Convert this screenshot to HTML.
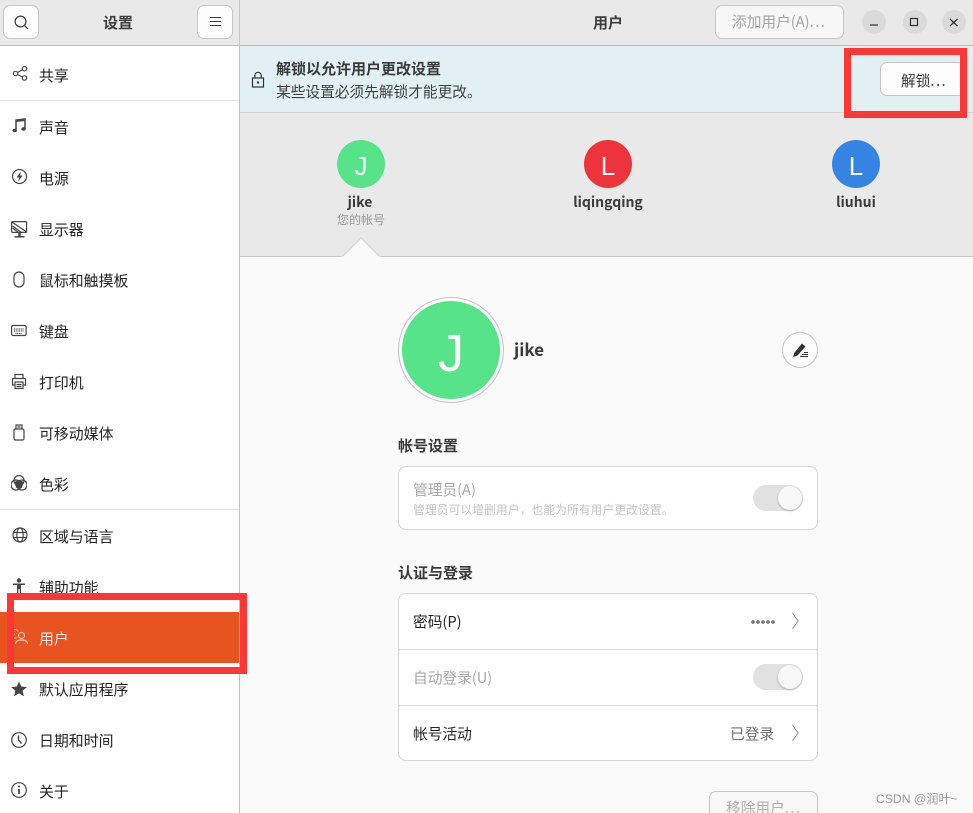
<!DOCTYPE html>
<html lang="zh-CN"><head><meta charset="utf-8"><title>设置</title>
<style>
*{box-sizing:border-box}
html,body{margin:0;padding:0;width:973px;height:813px;overflow:hidden;background:#fafafb}
#w{position:relative;width:973px;height:813px;overflow:hidden;background:#fafafb;font-family:"Liberation Sans","Noto Sans CJK SC",sans-serif;color:#242424}
.a{position:absolute}
.t{position:absolute;white-space:nowrap;font-size:14.7px;line-height:20px;font-family:"Noto Sans CJK SC","Liberation Sans",sans-serif}
.b{font-weight:700;font-size:15px}
.n{left:39px;font-size:14.9px}
.d{letter-spacing:1.5px}
.s{position:absolute;left:11px;width:16px;height:16px;fill:none;stroke:#454545;stroke-width:1.2}
.btn{position:absolute;background:#fdfdfd;border:1px solid #c6c6c6;border-radius:7px}
.tog{position:absolute;width:50px;height:26px;border-radius:13px;background:#e1e1e1}
.tog i{position:absolute;right:1px;top:1px;width:24px;height:24px;border-radius:50%;background:#f8f8f8;box-shadow:0 1px 2px rgba(0,0,0,.25)}
.av{position:absolute;border-radius:50%;color:#fff;text-align:center;font-family:"Liberation Sans",sans-serif}
.wc{position:absolute;top:10px;width:24px;height:24px;border-radius:50%;background:#dadada}
</style></head><body><div id="w">

<!-- header -->
<div class="a" style="left:0;top:0;width:973px;height:46px;background:#e9e9e9;border-bottom:1px solid #bdbdbd"></div>
<div class="a" style="left:239px;top:0;width:1px;height:46px;background:#c4c4c4"></div>
<div class="btn" style="left:3px;top:5px;width:36px;height:34px"></div>
<svg class="a" style="left:14px;top:15px" width="16" height="16" fill="none" stroke="#3a3a3a" stroke-width="1.2"><circle cx="6.500" cy="6.500" r="5.400"/><path d="M10.500 10.500l3.500 3.500"/></svg>
<div class="btn" style="left:197px;top:5px;width:36px;height:34px"></div>
<svg class="a" style="left:210px;top:16px" width="12" height="12" stroke="#3a3a3a" stroke-width="1"><path d="M0 1.500h11M0 5.500h11M0 9.500h11"/></svg>
<div class="t b" style="left:103px;top:13px;color:#3d3d3d">设置</div>
<div class="t b" style="left:593px;top:13px;color:#3d3d3d">用户</div>
<div class="btn" style="left:715px;top:5px;width:129px;height:34px;background:#f7f7f7"></div>
<div class="t" style="left:732px;top:12px;color:#a3a3a3">添加用户(A)<span class="d">...</span></div>
<div class="wc" style="left:862px"></div><div class="wc" style="left:902.500px"></div><div class="wc" style="left:942px"></div>
<svg class="a" style="left:863px;top:11px" width="103" height="23" fill="none" stroke="#2e2e2e" stroke-width="1.200"><path d="M7 14h8"/><rect x="47.500" y="7.500" width="7" height="7"/><path d="M87 8l7.500 7M94.500 8L87 15"/></svg>

<!-- sidebar -->
<div class="a" style="left:0;top:46px;width:239px;height:767px;background:#fff"></div>
<div class="a" style="left:239px;top:46px;width:1px;height:767px;background:#c4c4c4"></div>
<div class="a" style="left:0;top:100px;width:239px;height:1px;background:#e2e2e2"></div>
<div class="a" style="left:0;top:509px;width:239px;height:1px;background:#e2e2e2"></div>
<div class="a" style="left:0;top:612px;width:239px;height:51px;background:#e85420"></div>

<svg class="s" style="top:65px;left:11.500px;width:16px;height:18px" viewBox="0 0 16 18"><circle cx="3.500" cy="8.500" r="2.200"/><circle cx="12.500" cy="3.700" r="2.200"/><circle cx="12.500" cy="13" r="2.200"/><path d="M5.500 7.500l5-2.600M5.500 9.500l5 2.500"/></svg>
<svg class="s" style="top:117px;stroke-width:1.500" viewBox="0 0 16 16"><path d="M5 13.500V3l9-1v10"/><path d="M5 3.800l9-1" stroke-width="2.400"/><ellipse cx="3.700" cy="13.500" rx="2.200" ry="1.700" fill="#454545" stroke="none"/><ellipse cx="12.500" cy="12" rx="2.200" ry="1.700" fill="#454545" stroke="none"/></svg>
<svg class="s" style="top:169px;left:11.500px" viewBox="0 0 16 16"><circle cx="7.500" cy="7.500" r="7"/><path d="M9 2.500L4.500 8.500H7.200L6 12.700 10.700 6.500H8z" fill="#454545" stroke="none"/></svg>
<svg class="s" style="top:221px;width:17px;height:17px" viewBox="0 0 17 17"><rect x=".6" y=".6" width="15" height="10.800" rx="1"/><path d="M1 1l14.500 10M1.500 5l9 6.500M1.500 7l6 4.500"/><path d="M3.500 15.800h10" stroke-width="1.500"/><path d="M8.500 11.500v4" stroke-width="2.500"/></svg>
<svg class="s" style="top:271px;left:10.500px;height:17px" viewBox="0 0 16 17"><rect x="3" y="1" width="10" height="15" rx="5"/></svg>
<svg class="s" style="top:323px;width:16px" viewBox="0 0 16 16"><rect x=".6" y="2.500" width="14.500" height="10" rx="1.500"/><path d="M3 6h9.500M3 8h9.500M4.500 10.500h6.500" stroke-dasharray="1 .7"/></svg>
<svg class="s" style="top:373px;height:17px" viewBox="0 0 16 17"><path d="M4 6V1.500h8V6M3.500 12H1.500V6.500q0-1 1-1h11q1 0 1 1V12h-2"/><rect x="4" y="9" width="8" height="6.500"/><path d="M5.500 11.500h5M5.500 13.500h5"/></svg>
<svg class="s" style="top:424px;left:10.500px;height:17px" viewBox="0 0 16 17"><rect x="3" y="5" width="10" height="11" rx="1.500"/><path d="M5 5V1h6v4M6.500 3h3"/></svg>
<svg class="s" style="top:475px" viewBox="0 0 16 16"><circle cx="8" cy="5.500" r="5"/><circle cx="5" cy="10" r="5"/><circle cx="11" cy="10" r="5"/><path d="M3.500 7Q8 4 12.500 7L11 12.500Q8 15.500 5 12.500z" fill="#454545" stroke="none"/></svg>
<svg class="s" style="top:527px;left:11.500px" viewBox="0 0 16 16"><circle cx="8" cy="8" r="7"/><ellipse cx="8" cy="8" rx="3.200" ry="7"/><path d="M1.500 5.500h13M1.500 10.500h13"/></svg>
<svg class="s" style="top:578px;stroke:none;fill:#454545" viewBox="0 0 16 16"><circle cx="8" cy="2.500" r="2.200"/><path d="M2 5.500h12v1.500H10v8.500H8.700V11H7.300v4.500H6V7H2z"/></svg>
<svg class="s" style="top:629px;left:12px;stroke:#f7c4ae;width:17px;height:17px" viewBox="0 0 17 17"><circle cx="9.500" cy="6.500" r="3"/><path d="M3.500 15q0-4 6-4t6 4"/><path d="M6 2.500a2.500 2.500 0 1 0-3 3M1.500 9h3" stroke-opacity=".7"/></svg>
<svg class="s" style="top:681px;stroke:none;fill:#454545" viewBox="0 0 16 16"><path d="M8 .5l2.300 5 5.500.6-4.100 3.700 1.200 5.400L8 12.400l-4.900 2.800 1.200-5.400L.2 6.100l5.500-.6z"/></svg>
<svg class="s" style="top:732px" viewBox="0 0 16 16"><circle cx="8" cy="8" r="7.300"/><path d="M7.500 3.500V8l3 3.500" stroke-width="1.400"/></svg>
<svg class="s" style="top:782px" viewBox="0 0 16 16"><circle cx="8" cy="8" r="7.300"/><path d="M8 7v5" stroke-width="1.800"/><circle cx="8" cy="4.500" r="1" fill="#454545" stroke="none"/></svg>

<div class="t n" style="top:66px">共享</div>
<div class="t n" style="top:118px">声音</div>
<div class="t n" style="top:169px">电源</div>
<div class="t n" style="top:220px">显示器</div>
<div class="t n" style="top:271px">鼠标和触摸板</div>
<div class="t n" style="top:322px">键盘</div>
<div class="t n" style="top:373px">打印机</div>
<div class="t n" style="top:424px">可移动媒体</div>
<div class="t n" style="top:475px">色彩</div>
<div class="t n" style="top:527px">区域与语言</div>
<div class="t n" style="top:578px">辅助功能</div>
<div class="t n" style="top:629px;color:#fdeee7">用户</div>
<div class="t n" style="top:680px">默认应用程序</div>
<div class="t n" style="top:731px">日期和时间</div>
<div class="t n" style="top:782px">关于</div>

<!-- banner -->
<div class="a" style="left:240px;top:46px;width:733px;height:67px;background:#e2f0f4;border-bottom:1px solid #d2d2d2"></div>
<svg class="a" style="left:251px;top:71px" width="15" height="18" fill="none" stroke="#333" stroke-width="1.200"><rect x="1.500" y="7" width="11" height="9"/><path d="M3.800 7V4.500a3.200 3.200 0 0 1 6.400 0V7"/><circle cx="7" cy="11.500" r="1.200" fill="#333" stroke="none"/></svg>
<div class="t b" style="left:276px;top:59px;color:#3a3a3a">解锁以允许用户更改设置</div>
<div class="t" style="left:276px;top:82px;color:#3f3f3f">某些设置必须先解锁才能更改。</div>
<div class="btn" style="left:880px;top:62px;width:85px;height:34px"></div>
<div class="t" style="left:901px;top:71px;color:#3a3a3a">解锁<span class="d">...</span></div>

<!-- user band -->
<div class="a" style="left:240px;top:113px;width:733px;height:144px;background:#e9e9e9;border-bottom:1px solid #c6c6c6"></div>
<div class="av" style="left:337px;top:140px;width:48px;height:48px;background:#57e389;font-size:26px;line-height:52px">J</div>
<div class="av" style="left:584px;top:140px;width:48px;height:48px;background:#ed333b;font-size:26px;line-height:52px">L</div>
<div class="av" style="left:832px;top:140px;width:48px;height:48px;background:#3584e4;font-size:26px;line-height:52px">L</div>
<div class="t b" style="left:336px;width:48px;text-align:center;top:192px;color:#3a3a3a;font-size:14px">jike</div>
<div class="t b" style="left:558px;width:100px;text-align:center;top:192px;color:#3a3a3a;font-size:14px">liqingqing</div>
<div class="t b" style="left:806px;width:100px;text-align:center;top:192px;color:#3a3a3a;font-size:14px">liuhui</div>
<div class="t" style="left:337px;top:210px;color:#979797;font-size:12px">您的帐号</div>
<svg class="a" style="left:341px;top:237px" width="40" height="21"><path d="M1 20L20 1l19 19z" fill="#fafafb" stroke="#d4d4d4"/><path d="M0 20.500h40" stroke="#fafafb" stroke-width="2"/></svg>

<!-- profile -->
<div class="a" style="left:398px;top:297px;width:106px;height:106px;border-radius:50%;border:1px solid #c4c4c4;background:#fafafb"></div>
<div class="av" style="left:402px;top:301px;width:98px;height:98px;background:#57e389;font-size:52px;line-height:106px;font-weight:400">J</div>
<div class="t b" style="left:514px;top:336px;font-size:17px;line-height:25px;color:#3a3a3a">jike</div>
<div class="a" style="left:782px;top:332px;width:36px;height:36px;border-radius:50%;background:#fdfdfd;border:1px solid #c4c4c4"></div>
<svg class="a" style="left:792px;top:342px" width="17" height="16"><path d="M1 15l1.500-4.500L10 1.500l3.500 3L5.500 13.500z" fill="#333"/><path d="M8 14.500h8M10 12.500h6M12 10.500h4" stroke="#333" stroke-width="1"/></svg>

<div class="t b" style="left:398px;top:436px;color:#3a3a3a">帐号设置</div>
<div class="a" style="left:398px;top:466px;width:420px;height:64px;background:#fff;border:1px solid #d6d6d6;border-radius:8px"></div>
<div class="t" style="left:413px;top:480px;color:#a8a8a8">管理员(A)</div>
<div class="t" style="left:413px;top:500px;color:#c3c3c3;font-size:11.850px">管理员可以增删用户，也能为所有用户更改设置。</div>
<div class="tog" style="left:753px;top:485px"><i></i></div>

<div class="t b" style="left:398px;top:563px;color:#3a3a3a">认证与登录</div>
<div class="a" style="left:398px;top:593px;width:420px;height:168px;background:#fff;border:1px solid #d6d6d6;border-radius:8px"></div>
<div class="a" style="left:399px;top:649px;width:418px;height:1px;background:#d9d9d9"></div>
<div class="a" style="left:399px;top:705px;width:418px;height:1px;background:#d9d9d9"></div>
<div class="t" style="left:413px;top:612px">密码(P)</div>
<div class="a" style="left:751px;top:620px;width:24px;height:4px;background:radial-gradient(circle at 2px 2px,#777 1.700px,transparent 2px) 0 0/5px 4px repeat-x"></div>
<svg class="a" style="left:791px;top:612px" width="10" height="18" fill="none" stroke="#888" stroke-width=".9"><path d="M1.500 1l5.500 8-5.500 8"/></svg>
<div class="t" style="left:413px;top:668px;color:#a8a8a8">自动登录(U)</div>
<div class="tog" style="left:753px;top:664px"><i></i></div>
<div class="t" style="left:413px;top:724px">帐号活动</div>
<div class="t" style="left:730px;top:724px;color:#6f6f6f">已登录</div>
<svg class="a" style="left:791px;top:724px" width="10" height="18" fill="none" stroke="#888" stroke-width=".9"><path d="M1.500 1l5.500 8-5.500 8"/></svg>

<div class="btn" style="left:709px;top:791px;width:109px;height:34px;background:#f8f8f8"></div>
<div class="t" style="left:726px;top:798px;color:#b0b0b0">移除用户<span class="d">...</span></div>
<div class="t" style="left:876px;top:789px;color:#9a9a9a;font-size:12.200px;font-family:'Liberation Sans','Noto Sans CJK SC',sans-serif">CSDN @润叶~</div>

<!-- annotation rectangles -->
<div class="a" style="left:7px;top:593px;width:240px;height:81px;border:7px solid #fd3636"></div>
<div class="a" style="left:844px;top:48px;width:123px;height:70px;border:7px solid #fd3636"></div>
</div></body></html>
